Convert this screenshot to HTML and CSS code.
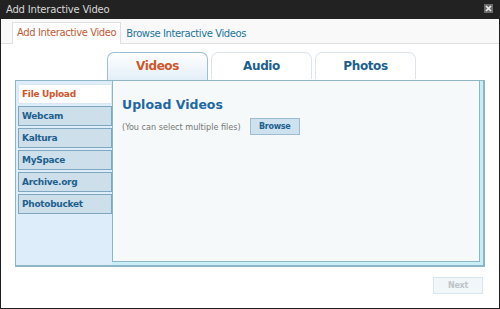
FILE: index.html
```html
<!DOCTYPE html>
<html>
<head>
<meta charset="utf-8">
<link rel="stylesheet" href="styles.css">
</head>
<body>
<div class="window">
  <div class="titlebar">
    <span class="title">Add Interactive Video</span>
    <span class="close"><svg width="9" height="9" viewBox="0 0 9 9"><rect width="9" height="9" fill="#6a6a6a"/><path d="M2 2L7 7M7 2L2 7" stroke="#eee" stroke-width="1.6"/></svg></span>
  </div>
  <div class="tabbar">
    <span class="tab active">Add Interactive Video</span>
    <span class="tab">Browse Interactive Videos</span>
  </div>
  <div class="body">
    <div class="media-tabs">
      <span class="mtab active">Videos</span>
      <span class="mtab">Audio</span>
      <span class="mtab">Photos</span>
    </div>
    <div class="panel">
      <div class="sidebar">
        <div class="item active">File Upload</div>
        <div class="item">Webcam</div>
        <div class="item">Kaltura</div>
        <div class="item">MySpace</div>
        <div class="item">Archive.org</div>
        <div class="item">Photobucket</div>
      </div>
      <div class="main">
        <h2 class="heading">Upload Videos</h2>
        <div class="row">
          <span class="hint">(You can select multiple files)</span>
          <span class="btn">Browse</span>
        </div>
      </div>
    </div>
    <div class="footer">
      <span class="next">Next</span>
    </div>
  </div>
</div>
</body>
</html>
```
FILE: styles.css
```css
html, body { margin: 0; padding: 0; }
body { font-family: "DejaVu Sans", Verdana, sans-serif; background: #fff; }
.window {
  width: 500px; height: 309px; box-sizing: border-box;
  border: 1px solid #1e1e1e; border-top: none;
  display: flex; flex-direction: column; background: #fff;
}
.titlebar {
  height: 19px; background: #222; color: #d8d8d8;
  display: flex; align-items: center; justify-content: space-between;
  padding: 0 7px 0 6px; font-size: 10px; margin: 0 -1px;
}
.title { letter-spacing: -0.2px; }
.close { display: flex; margin-top: -2px; }
.tabbar {
  height: 25px; box-sizing: border-box; background: #f9f9f9;
  border-bottom: 1px solid #dfdfdf;
  display: flex; align-items: flex-end; padding-left: 11px;
}
.tab {
  font-size: 10px; color: #21759b; height: 21px; line-height: 20px;
  padding: 0 4px; box-sizing: border-box; letter-spacing: -0.4px;
  border: 1px solid transparent; border-bottom: none; margin-bottom: -1px;
}
.tab.active { color: #c45a35; background: #fff; border-color: #dfdfdf; height: 22px; }
.body { padding: 0 14px; flex: 1; display: flex; flex-direction: column; }
.media-tabs { display: flex; gap: 3px; padding-left: 92px; margin-top: 8px; }
.mtab {
  width: 101px; height: 27px; box-sizing: border-box;
  border: 1px solid #dde5ea; border-bottom: none; border-radius: 7px 7px 0 0;
  font-size: 12px; font-weight: bold; color: #1d5f8d; text-align: center; line-height: 27px;
  background: #fff; letter-spacing: -0.4px;
}
.mtab.active {
  color: #d1542a; border-color: #9cc0d2; height: 28px;
  background: linear-gradient(#ffffff, #e2eff8);
}
.panel {
  height: 187px; box-sizing: border-box; display: flex;
  border: 2px solid #8db5c5; border-left-width: 1px; border-top-width: 1px;
  background: #c9eef8;
}
.sidebar {
  width: 96px; background: #ddedfa; padding: 3px 0 0 2px; box-sizing: border-box;
  display: flex; flex-direction: column; gap: 2px;
}
.item {
  height: 20px; box-sizing: border-box; border: 1px solid #7fa7c0;
  background: #cedfec; color: #1d5f8d; font-size: 9px; font-weight: bold;
  line-height: 18px; padding-left: 3px; letter-spacing: -0.3px;
}
.item.active { background: #fff; color: #d1542a; border-color: #dbe8f1; }
.main {
  flex: 1; background: #f5f9f9; border-left: 1px solid #8db5c5; border-right: 1px solid #8db5c5;
  border-bottom: 1px solid #8db5c5; margin: 0 3px 3px 0; padding: 16px 9px;
}
.heading { margin: 0; font-size: 12.5px; font-weight: bold; color: #1e68a4; letter-spacing: 0; }
.row { display: flex; align-items: center; margin-top: 6px; gap: 9px; }
.hint { font-family: "DejaVu Sans Condensed", "DejaVu Sans", sans-serif; font-size: 9px; color: #777; }
.btn {
  width: 50px; height: 17px; box-sizing: border-box; background: #cde1ef;
  border: 1px solid #9bbcd1; font-size: 8px; font-weight: bold; color: #1d5f8d;
  text-align: center; line-height: 15px; letter-spacing: -0.3px;
}
.footer { display: flex; justify-content: flex-end; margin-top: 10px; padding-right: 2px; }
.next {
  width: 50px; height: 17px; box-sizing: border-box; background: #f1f6f9;
  border: 1px solid #d8e6ef; font-size: 8px; font-weight: bold; color: #bcc4c8;
  text-align: center; line-height: 15px; letter-spacing: -0.3px;
}
```
